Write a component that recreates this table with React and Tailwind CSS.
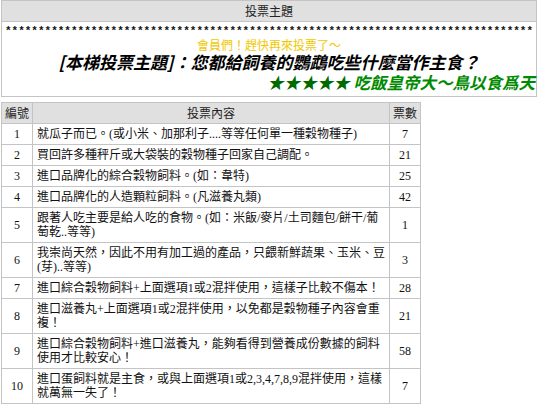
import React from "react";

const rows = [
  [1, ["就瓜子而已。(或小米、加那利子....等等任何單一種穀物種子)"], 7],
  [2, ["買回許多種秤斤或大袋裝的穀物種子回家自己調配。"], 21],
  [3, ["進口品牌化的綜合穀物飼料。(如：韋特)"], 25],
  [4, ["進口品牌化的人造顆粒飼料。(凡滋養丸類)"], 42],
  [5, ["跟著人吃主要是給人吃的食物。(如：米飯/麥片/土司麵包/餅干/葡", "萄乾..等等)"], 1],
  [6, ["我崇尚天然，因此不用有加工過的產品，只餵新鮮蔬果、玉米、豆", "(芽)..等等)"], 3],
  [7, ["進口綜合穀物飼料+上面選項1或2混拌使用，這樣子比較不傷本！"], 28],
  [8, ["進口滋養丸+上面選項1或2混拌使用，以免都是穀物種子內容會重", "複！"], 21],
  [9, ["進口綜合穀物飼料+進口滋養丸，能夠看得到營養成份數據的飼料", "使用才比較安心！"], 58],
  [10, ["進口蛋飼料就是主食，或與上面選項1或2,3,4,7,8,9混拌使用，這樣", "就萬無一失了！"], 7],
];

const stars = "*".repeat(80);

export default function App() {
  return (
    <div className="w-[538px] h-[405px] bg-white overflow-hidden font-['Noto_Sans_CJK_TC',sans-serif] text-[12px] text-[#111] [text-autospace:no-autospace] [text-spacing-trim:space-all]">
      {/* Top box */}
      <div className="ml-px w-[536px] h-[97px] border border-[#c4c4c4] flex flex-col">
        <div className="h-[21px] bg-[#e0e0e0] border-b border-[#c4c4c4] text-center leading-[20px] text-[#222]">
          投票主題
        </div>
        <div className="mt-[2px] h-[14px] leading-[14px] text-center whitespace-nowrap overflow-hidden font-['Liberation_Mono',monospace] text-[11px] font-bold text-[#111]">
          {stars}
        </div>
        <div className="h-[14px] leading-[14px] text-center text-[#f0c800]">
          會員們！趕快再來投票了～
        </div>
        <div className="h-[20px] leading-[20px] text-center text-[17px] font-bold italic text-black whitespace-nowrap">
          [本梯投票主題]：您都給飼養的鸚鵡吃些什麼當作主食？
        </div>
        <div className="h-[20px] leading-[20px] text-right pr-[1px] text-[16.5px] font-bold italic whitespace-nowrap">
          <span className="text-[#006a00]">★★★★★</span>
          <span className="text-[#008a00]"> 吃飯皇帝大～鳥以食爲天</span>
        </div>
      </div>

      {/* Vote table */}
      <div className="mt-[5px] ml-px w-[420px] border-l border-t border-[#c4c4c4] flex flex-col">
        <div className="flex bg-[#e0e0e0] text-[#222]">
          <div className="w-[31px] border-r border-b border-[#c4c4c4] py-[3px] leading-[14px] text-center whitespace-nowrap">編號</div>
          <div className="w-[357px] border-r border-b border-[#c4c4c4] py-[3px] leading-[14px] text-center">投票內容</div>
          <div className="w-[31px] border-r border-b border-[#c4c4c4] py-[3px] leading-[14px] text-center whitespace-nowrap">票數</div>
        </div>
        {rows.map(([n, lines, v]) => (
          <div key={n} className="flex">
            <div className="w-[31px] border-r border-b border-[#c4c4c4] flex items-center justify-center font-['Liberation_Serif',serif] text-[12px]">
              {n}
            </div>
            <div className="w-[357px] border-r border-b border-[#c4c4c4] py-[3px] px-[4px] leading-[14px] font-['Liberation_Serif','Noto_Sans_CJK_TC',serif] whitespace-nowrap">
              {lines.map((l, i) => (
                <div key={i}>{l}</div>
              ))}
            </div>
            <div className="w-[31px] border-r border-b border-[#c4c4c4] flex items-center justify-center font-['Liberation_Serif',serif] text-[12px]">
              {v}
            </div>
          </div>
        ))}
      </div>
    </div>
  );
}
